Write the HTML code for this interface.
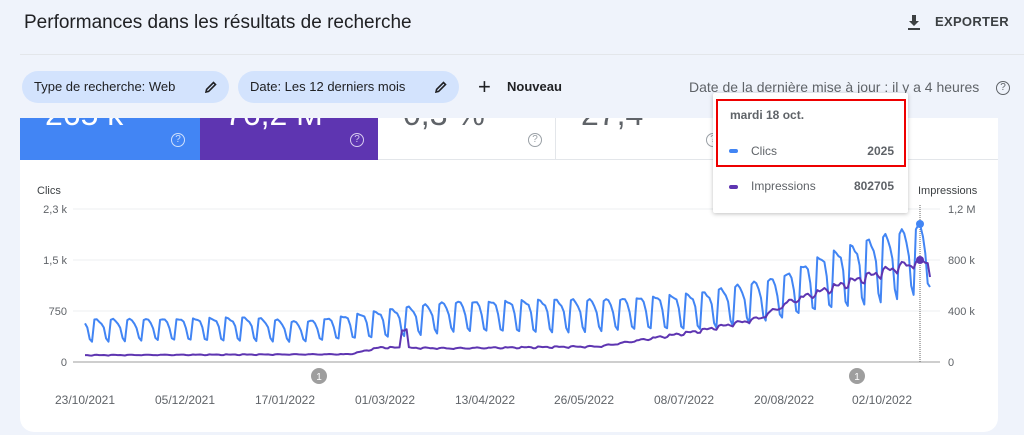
<!DOCTYPE html>
<html><head><meta charset="utf-8"><style>
*{box-sizing:border-box;margin:0;padding:0}
body{width:1024px;height:435px;background:#eff3fb;font-family:"Liberation Sans",sans-serif;position:relative;overflow:hidden;color:#3c4043}
.abs{position:absolute}
.title{left:24px;top:12px;font-size:19px;color:#202124}
.exp{top:14px;font-size:13px;font-weight:bold;color:#3c4043;letter-spacing:.3px}
.hr{left:20px;top:54px;width:1004px;height:1px;background:#e3e6ea}
.chip{top:71px;height:32px;border-radius:16px;background:#d3e3fd;font-size:13px;color:#202124;padding:0 12px;line-height:32px}
.card{left:20px;top:118px;width:978px;height:314px;background:#fff;border-radius:0 0 14px 14px}
.tile{top:118px;height:42px;overflow:hidden}
.big{position:absolute;left:25px;top:-22px;font-size:32px}
.q{width:14px;height:14px;border:1.3px solid;border-radius:50%;font-size:10px;text-align:center;line-height:12px}
.tip{left:713px;top:93px;width:195px;height:120px;background:#fff;box-shadow:0 1px 4px rgba(0,0,0,.25);border-radius:2px}
</style></head><body>
<div class="abs title">Performances dans les résultats de recherche</div>
<svg class="abs" style="left:906px;top:14px" width="16" height="18" viewBox="0 0 16 18"><path d="M6 1h4v6h3l-5 5-5-5h3z" fill="#3c4043"/><rect x="2" y="14" width="12" height="2" fill="#3c4043"/></svg>
<div class="abs exp" style="left:935px">EXPORTER</div>
<div class="abs hr"></div>
<div class="abs chip" style="left:22px;width:207px">Type de recherche: Web <svg style="position:absolute;right:12px;top:10px" width="12" height="12" viewBox="0 0 12 12"><path d="M1 11l0.6-2.6L8.5 1.5l2 2L3.6 10.4z" fill="none" stroke="#202124" stroke-width="1.6"/></svg></div>
<div class="abs chip" style="left:238px;width:221px">Date: Les 12 derniers mois <svg style="position:absolute;right:12px;top:10px" width="12" height="12" viewBox="0 0 12 12"><path d="M1 11l0.6-2.6L8.5 1.5l2 2L3.6 10.4z" fill="none" stroke="#202124" stroke-width="1.6"/></svg></div>
<div class="abs" style="left:478px;top:74px;font-size:22px;color:#202124">+</div>
<div class="abs" style="left:507px;top:79px;font-size:13px;font-weight:bold;color:#202124">Nouveau</div>
<div class="abs" style="left:689px;top:79px;font-size:14px;color:#5f6368">Date de la dernière mise à jour : il y a 4 heures</div>
<div class="abs q" style="left:996px;top:81px;color:#5f6368;border-color:#5f6368">?</div>
<div class="abs card"></div>
<div class="abs tile" style="left:20px;width:180px;background:#4285f4"><div class="big" style="color:#fff">265 k</div><div class="abs q" style="left:151px;top:15px;color:#cfe0fc;border-color:#cfe0fc">?</div></div>
<div class="abs tile" style="left:200px;width:178px;background:#5e35b1"><div class="big" style="color:#fff">76,2 M</div><div class="abs q" style="left:150px;top:15px;color:#d8ccf0;border-color:#d8ccf0">?</div></div>
<div class="abs tile" style="left:378px;width:178px;border-right:1px solid #e3e6ea;border-bottom:1px solid #e3e6ea"><div class="big" style="color:#5f6368">0,3 %</div><div class="abs q" style="left:150px;top:15px;color:#9aa0a6;border-color:#9aa0a6">?</div></div>
<div class="abs tile" style="left:556px;width:442px;border-bottom:1px solid #e3e6ea"><div class="big" style="color:#5f6368">27,4</div><div class="abs q" style="left:150px;top:15px;color:#9aa0a6;border-color:#9aa0a6">?</div></div>
<svg class="abs" style="left:0;top:0" width="1024" height="435">
<g stroke="#eceff1" stroke-width="1"><line x1="73" x2="940" y1="209" y2="209"/><line x1="73" x2="940" y1="260" y2="260"/><line x1="73" x2="940" y1="311" y2="311"/></g>
<line x1="73" x2="940" y1="362" y2="362" stroke="#bdbdbd" stroke-width="1.5"/>
<g font-family="Liberation Sans" font-size="11" fill="#5f6368">
<text x="37" y="194" fill="#3c4043">Clics</text>
<text x="67" y="213" text-anchor="end">2,3 k</text><text x="67" y="264" text-anchor="end">1,5 k</text><text x="67" y="315" text-anchor="end">750</text><text x="67" y="366" text-anchor="end">0</text>
<text x="918" y="194" fill="#3c4043">Impressions</text>
<text x="948" y="213">1,2 M</text><text x="948" y="264">800 k</text><text x="948" y="315">400 k</text><text x="948" y="366">0</text>
<g text-anchor="middle" font-size="12"><text x="85" y="404">23/10/2021</text><text x="185" y="404">05/12/2021</text><text x="285" y="404">17/01/2022</text><text x="385" y="404">01/03/2022</text><text x="485" y="404">13/04/2022</text><text x="584" y="404">26/05/2022</text><text x="684" y="404">08/07/2022</text><text x="784" y="404">20/08/2022</text><text x="882" y="404">02/10/2022</text></g>
</g>
<circle cx="319" cy="376" r="8" fill="#9e9e9e"/><text x="319" y="380" font-size="10" fill="#fff" text-anchor="middle" font-family="Liberation Sans">1</text>
<circle cx="857" cy="376" r="8" fill="#9e9e9e"/><text x="857" y="380" font-size="10" fill="#fff" text-anchor="middle" font-family="Liberation Sans">1</text>
<line x1="920" x2="920" y1="205" y2="362" stroke="#666" stroke-dasharray="1,1"/>
<path id="pb" fill="none" stroke="#4285f4" stroke-width="2" stroke-linejoin="round"/>
<path id="pp" fill="none" stroke="#5e35b1" stroke-width="2" stroke-linejoin="round"/>
<circle cx="920" cy="224" r="4" fill="#4285f4"/><circle cx="920" cy="260" r="4" fill="#5e35b1"/>
</svg>
<div class="abs tip">
<div class="abs" style="left:3px;top:6px;width:190px;height:68px;border:2px solid #e00"></div>
<div class="abs" style="left:17px;top:15px;font-size:12px;font-weight:bold;color:#5f6368">mardi 18 oct.</div>
<div class="abs" style="left:16px;top:56px;width:9px;height:4px;border-radius:2px;background:#4285f4"></div>
<div class="abs" style="left:38px;top:51px;font-size:12px;color:#5f6368">Clics</div>
<div class="abs" style="right:14px;top:51px;font-size:12px;font-weight:bold;color:#5f6368">2025</div>
<div class="abs" style="left:16px;top:92px;width:9px;height:4px;border-radius:2px;background:#5e35b1"></div>
<div class="abs" style="left:38px;top:86px;font-size:12px;color:#5f6368">Impressions</div>
<div class="abs" style="right:14px;top:86px;font-size:12px;font-weight:bold;color:#5f6368">802705</div>
</div>
<script>
function interp(t,x){for(var i=1;i<t.length;i++){if(x<=t[i][0]){var a=t[i-1],b=t[i],f=(x-a[0])/(b[0]-a[0]);return a[1]+f*(b[1]-a[1]);}}return t[t.length-1][1];}
var C=[[85,42],[250,44],[300,40],[450,60],[600,62],[700,68],[780,85],[820,105],[860,118],[900,130],[930,140]];
var P=[[85,7],[350,8],[380,15],[450,14],[600,16],[700,32],[760,45],[790,62],[850,82],[900,98],[930,105]];
var wk=[1,1,0.97,0.92,0.8,0.55,0.5];
var n=360,b="",p="";
for(var i=0;i<=n;i++){var x=85+i*845/n,w=wk[(i+3)%7],r=Math.sin(i*1.7)*0.02;
var hc=interp(C,x)*(w+r);var hp=interp(P,x)*(0.85+0.15*w+r);
if(x>400&&x<407)hp+=18;
if(i==n){hc=75;hp=85;}
b+=(i?"L":"M")+x.toFixed(1)+" "+(362-hc).toFixed(1);p+=(i?"L":"M")+x.toFixed(1)+" "+(362-hp).toFixed(1);}
document.getElementById("pb").setAttribute("d",b);document.getElementById("pp").setAttribute("d",p);
</script>
</body></html>
